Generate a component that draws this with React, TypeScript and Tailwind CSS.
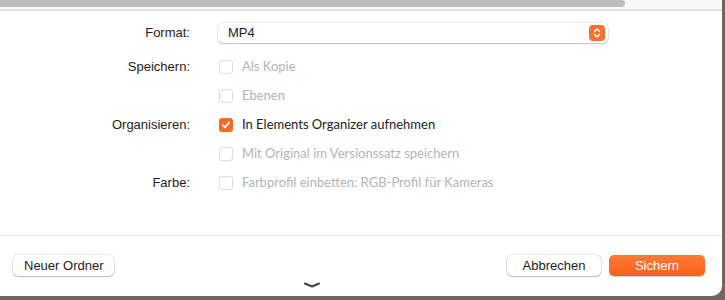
import React from "react";

const sys = { fontFamily: '"Liberation Sans", Arial, sans-serif' };
const adobe = { fontFamily: 'Lato, "Open Sans", sans-serif' };

function Check({ label, checked = false }: { label: string; checked?: boolean }) {
  return (
    <div className="flex h-[29px] items-center gap-[9px]" style={adobe}>
      {checked ? (
        <span className="flex h-[14px] w-[14px] items-center justify-center rounded-[3px] bg-[#f26b24]">
          <svg width="10" height="10" viewBox="0 0 10 10" fill="none">
            <path d="M1.8 5.2 L4 7.4 L8.2 2.4" stroke="white" strokeWidth="1.7" strokeLinecap="round" strokeLinejoin="round" />
          </svg>
        </span>
      ) : (
        <span className="h-[14px] w-[14px] rounded-[3px] border border-[#dcdcdc] bg-white" />
      )}
      <span className={`text-[13px] ${checked ? "text-[#222]" : "text-[#b5b5b5]"}`}>{label}</span>
    </div>
  );
}

function Row({ label, children }: { label?: string; children: React.ReactNode }) {
  return (
    <div className="flex">
      <div className="flex h-[29px] w-[190px] items-center justify-end text-[13px] text-[#1d1d1d]" style={sys}>
        {label}
      </div>
      <div className="ml-[29px]">{children}</div>
    </div>
  );
}

export default function App() {
  return (
    <div className="relative h-[300px] w-[725px] overflow-hidden bg-[#6d6661]">
      <div className="flex h-[296px] w-[722px] flex-col rounded-br-[10px] bg-white">
        {/* top scroll strip */}
        <div className="h-[9px] bg-[#f7f7f7] pr-[100px]">
          <div className="h-[7px] w-[625px] rounded-r-full bg-[#bdbdbd]" />
        </div>
        <div className="h-[2px] bg-[#e3e3e3]" />

        <div className="flex items-center pt-[12px]">
          <div className="w-[190px] text-right text-[13px] text-[#1d1d1d]" style={sys}>
            Format:
          </div>
          <div className="ml-[28px] flex h-[20px] w-[390px] items-center justify-between rounded-[5px] bg-white pl-[10px] pr-[3px] shadow-[0_0_0_0.5px_rgba(0,0,0,0.15),0_1px_1.5px_rgba(0,0,0,0.18)]" style={sys}>
            <span className="text-[13px] text-[#1d1d1d]">MP4</span>
            <span className="flex h-[16px] w-[16px] items-center justify-center rounded-[4px] bg-[#f27430]">
              <svg width="8" height="12" viewBox="0 0 8 12" fill="none">
                <path d="M1.5 4.5 L4 2 L6.5 4.5 M1.5 7.5 L4 10 L6.5 7.5" stroke="white" strokeWidth="1.4" strokeLinecap="round" strokeLinejoin="round" />
              </svg>
            </span>
          </div>
        </div>

        <div className="mt-[9px] flex flex-col">
          <Row label="Speichern:">
            <Check label="Als Kopie" />
          </Row>
          <Row>
            <Check label="Ebenen" />
          </Row>
          <Row label="Organisieren:">
            <Check label="In Elements Organizer aufnehmen" checked />
          </Row>
          <Row>
            <Check label="Mit Original im Versionssatz speichern" />
          </Row>
          <Row label="Farbe:">
            <Check label="Farbprofil einbetten: RGB-Profil für Kameras" />
          </Row>
        </div>

        <div className="mt-auto h-px bg-[#e6e6e6]" />
        <div className="relative flex h-[60px] items-start justify-between pl-[13px] pr-[17px] pt-[19px]" style={sys}>
          <button className="h-[21px] rounded-[5px] bg-white px-[11px] text-[13px] text-[#1d1d1d] shadow-[0_0_0_0.5px_rgba(0,0,0,0.18),0_1px_1.5px_rgba(0,0,0,0.2)]">
            Neuer Ordner
          </button>
          <div className="flex gap-[8px]">
            <button className="h-[21px] w-[94px] rounded-[5px] bg-white text-[13px] text-[#1d1d1d] shadow-[0_0_0_0.5px_rgba(0,0,0,0.18),0_1px_1.5px_rgba(0,0,0,0.2)]">
              Abbrechen
            </button>
            <button className="h-[21px] w-[96px] rounded-[5px] bg-gradient-to-b from-[#ff7a34] to-[#fa5f1c] text-[13px] text-white shadow-[0_0.5px_1px_rgba(0,0,0,0.2)]">
              Sichern
            </button>
          </div>
          <svg className="absolute left-[302px] top-[45px]" width="20" height="8" viewBox="0 0 20 8" fill="none">
            <path d="M3 2.5 L10 5.5 L17 2.5" stroke="#3f3f3f" strokeWidth="2" strokeLinecap="round" strokeLinejoin="round" />
          </svg>
        </div>
      </div>
    </div>
  );
}
